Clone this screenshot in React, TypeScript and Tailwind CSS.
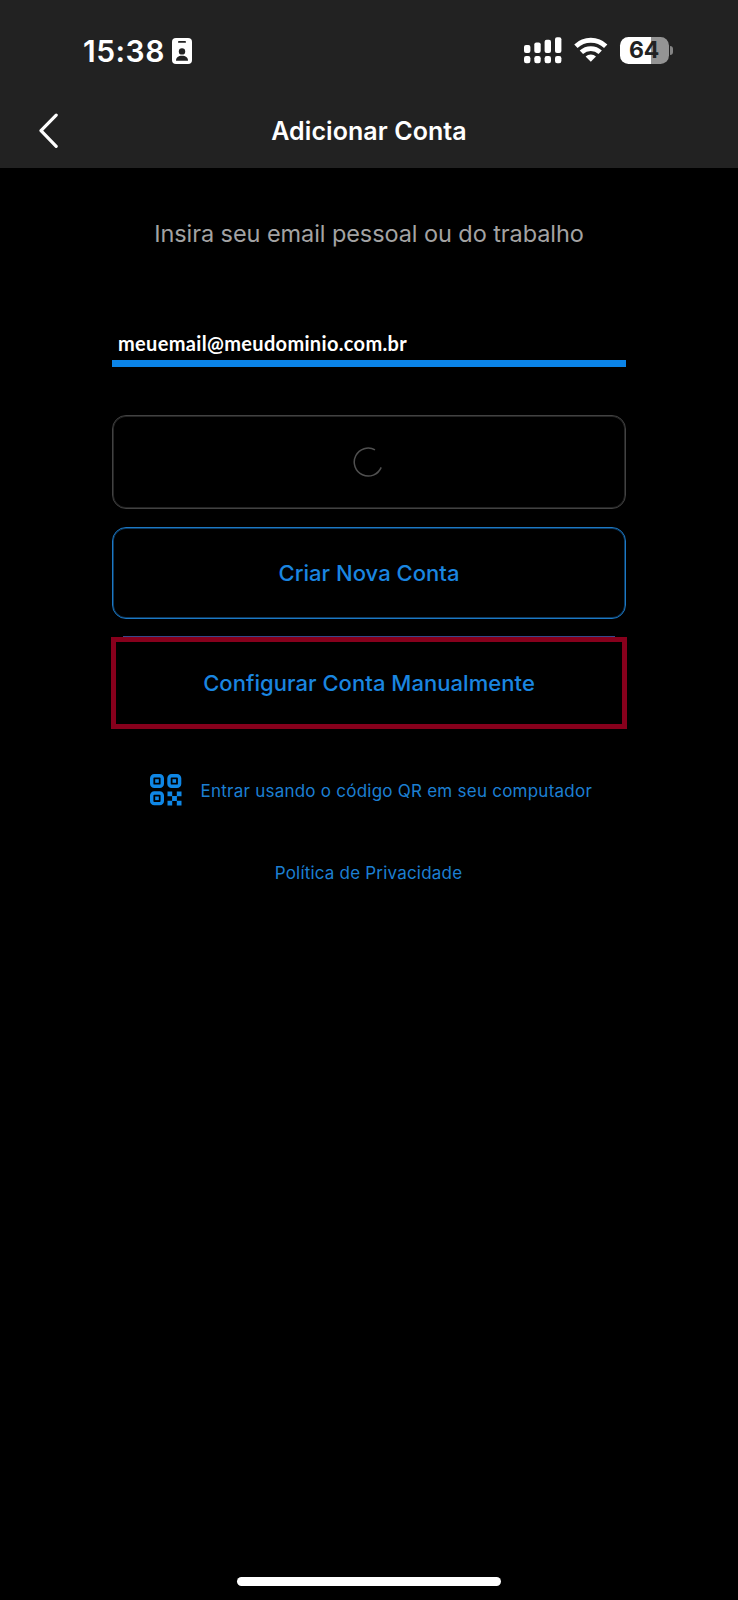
import React from 'react';

const IdBadge = () => (
    <svg width="20" height="26" viewBox="0 0 20 26">
        <rect width="20" height="26" rx="4" fill="#fff" />
        <rect x="6" y="3" width="8" height="1.8" rx="0.9" fill="#222" />
        <circle cx="10" cy="13.4" r="3.2" fill="#222" />
        <path d="M4 22.8c0-3.4 2.4-5 6-5s6 1.6 6 5z" fill="#222" />
    </svg>
);

const DualSignal = () => (
    <svg width="38" height="27" viewBox="0 0 38 27" fill="#fff">
        <rect x="0" y="8" width="6.4" height="8" rx="2" />
        <rect x="10.3" y="5.5" width="6.4" height="10.5" rx="2" />
        <rect x="20.6" y="2.8" width="6.4" height="13.2" rx="2" />
        <rect x="31" y="0.3" width="6.4" height="15.7" rx="2" />
        <rect x="0" y="19" width="6.4" height="7.2" rx="2.2" />
        <rect x="10.3" y="19" width="6.4" height="7.2" rx="2.2" />
        <rect x="20.6" y="19" width="6.4" height="7.2" rx="2.2" />
        <rect x="31" y="19" width="6.4" height="7.2" rx="2.2" />
    </svg>
);

const Wifi = () => (
    <svg width="34" height="26" viewBox="0 0 34 26" fill="none" stroke="#fff" strokeWidth="4.8">
        <path d="M1.9 9.2a21.6 21.6 0 0 1 29.8 0" />
        <path d="M7.4 15.3a13.6 13.6 0 0 1 18.8 0" />
        <path d="M16.8 24.8l-5.2-5.2a7.5 7.5 0 0 1 10.4 0z" fill="#fff" stroke="none" />
    </svg>
);

const Battery = () => (
    <div className="flex items-center gap-[1.5px]">
        <div className="flex h-[27px] w-[49px] items-center justify-center rounded-[8.5px] bg-[linear-gradient(90deg,#fff_31px,#949494_31px)] text-[23px] leading-none font-bold tracking-[-0.3px] text-[#222]">
            64
        </div>
        <div className="h-[9px] w-[3px] rounded-r-full bg-[#848484]" />
    </div>
);

const Finder = ({ x, y }: { x: number; y: number }) => (
    <g>
        <rect x={x + 1.7} y={y + 1.7} width="10.6" height="10.6" rx="2.6" fill="none" stroke="#0f87e6" strokeWidth="3.4" />
        <rect x={x + 5.2} y={y + 5.2} width="3.6" height="3.6" fill="#0f87e6" />
    </g>
);

const QrIcon = () => (
    <svg width="32" height="32" viewBox="0 0 32 32">
        <Finder x={0} y={0} />
        <Finder x={17.3} y={0} />
        <Finder x={0} y={17.3} />
        <path
            fill="#0f87e6"
            d="M17.5 17.5h4.7v4.7h-4.7zM26.8 17.5h4.7v4.7h-4.7zM22.1 22.1h4.8v4.8h-4.8zM17.5 26.8h4.7v4.7h-4.7zM26.8 26.8h4.7v4.7h-4.7z"
        />
    </svg>
);

const Header = () => (
    <header className="h-[168px] bg-[#222222] text-white">
        {/* Status bar */}
        <div className="flex h-[100px] items-center justify-between pr-[65px] pl-[83px]">
            <div className="flex items-center gap-[8px] pt-px">
                <span className="w-[81px] text-[30px] leading-none font-semibold tracking-[0.5px] whitespace-nowrap">15:38</span>
                <IdBadge />
            </div>
            <div className="flex items-center">
                <DualSignal />
                <div className="ml-[12px]">
                    <Wifi />
                </div>
                <div className="ml-[12px]">
                    <Battery />
                </div>
            </div>
        </div>

        {/* Navigation */}
        <div className="grid h-[62px] grid-cols-[100px_1fr_100px] items-center">
            <button className="pl-[38px]" aria-label="Voltar">
                <svg width="22" height="36" viewBox="0 0 22 36" fill="none" stroke="#fff" strokeWidth="3.2" strokeLinecap="round" strokeLinejoin="round">
                    <path d="M18.2 2.1L3 17.7l15.2 15.6" />
                </svg>
            </button>
            <h1 className="pt-px text-center text-[25px] leading-none font-semibold tracking-[0.08px] whitespace-nowrap">Adicionar Conta</h1>
        </div>
    </header>
);

export default function App() {
    return (
        <div className="flex h-[1600px] w-[738px] flex-col bg-black font-['Inter',sans-serif]">
            <Header />

            <main className="flex flex-1 flex-col px-[111px]">
                <p className="mt-[50px] text-center text-[23.5px] leading-[32px] tracking-[-0.08px] whitespace-nowrap text-[#a3a3a3]">
                    Insira seu email pessoal ou do trabalho
                </p>

                <div className="mx-px mt-[80px] h-[37px] border-b-[7px] border-[#0b84e8] pl-[6px] font-['Lato',sans-serif] text-[20px] leading-[26px] font-bold tracking-[0.33px] whitespace-nowrap text-white">
                    meuemail@meudominio.com.br
                </div>

                {/* Loading button */}
                <div className="mx-px mt-[48px] flex h-[94px] items-center justify-center rounded-[14px] border border-[#424242] shadow-[inset_0_0_0_1px_#242424]">
                    <svg className="mr-[2px]" width="30" height="30" viewBox="0 0 30 30" fill="none" stroke="#505050" strokeWidth="1.5">
                        <path d="M22 2.8a14 14 0 1 0 6.2 17.6" />
                    </svg>
                </div>

                <button className="mx-px mt-[18px] flex h-[92px] items-center justify-center rounded-[14px] border border-[#1c78c4] text-[22px] font-medium tracking-[0.03px] text-[#1a86e0] shadow-[inset_0_0_0_1px_#0c3960]">
                    <span className="whitespace-nowrap">Criar Nova Conta</span>
                </button>

                {/* Highlighted option, the button edge peeks out above the frame */}
                <div className="mt-[17px]">
                    <div className="mx-[12px] h-px bg-[#37488c]" />
                    <button className="flex h-[92px] w-full items-center justify-center border-[5px] border-[#87001c] text-[22px] font-medium tracking-[0.05px] text-[#1a86e0]">
                        <span className="whitespace-nowrap">Configurar Conta Manualmente</span>
                    </button>
                </div>

                <a className="mt-[45px] flex h-[32px] items-center pl-[39px] text-[17px] leading-[34px] tracking-[0.24px] text-[#1c7fd2]">
                    <QrIcon />
                    <span className="ml-[18.5px] pt-px whitespace-nowrap">Entrar usando o código QR em seu computador</span>
                </a>

                <a className="mt-[51px] mr-px text-center text-[17px] leading-[32px] tracking-[0.2px] text-[#1c7fd2]">Política de Privacidade</a>

                <div className="mt-auto mb-[14px] h-[9px] w-[264px] self-center rounded-full bg-white" />
            </main>
        </div>
    );
}
